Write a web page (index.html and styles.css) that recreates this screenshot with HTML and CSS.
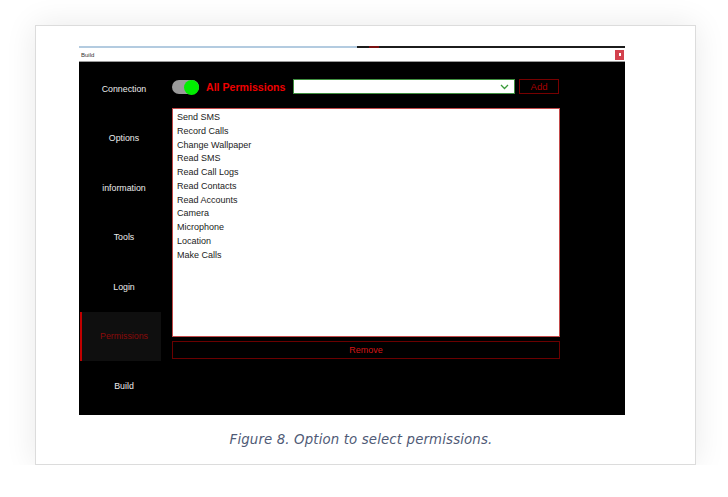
FILE: index.html
```html
<!DOCTYPE html>
<html lang="en">

<head>
    <meta charset="UTF-8">
    <meta name="viewport" content="width=device-width, initial-scale=1.0">
    <title>Figure 8</title>
    <link rel="stylesheet" href="styles.css">
</head>

<body>
    <div class="card">
        <div class="window">
            <div class="window-strip"></div>
            <div class="title-bar">
                <span class="title">Build</span>
                <span class="close"><i></i></span>
            </div>
            <div class="window-body">
                <nav class="sidebar">
                    <a class="side-item">Connection</a>
                    <a class="side-item">Options</a>
                    <a class="side-item">information</a>
                    <a class="side-item">Tools</a>
                    <a class="side-item">Login</a>
                    <a class="side-item active">Permissions</a>
                    <a class="side-item">Build</a>
                </nav>
                <div class="main">
                    <div class="top-row">
                        <span class="toggle"><span class="knob"></span></span>
                        <span class="all-label">All Permissions</span>
                        <div class="select">
                            <svg width="9" height="6" viewBox="0 0 9 6">
                                <path d="M1 1 L4.5 4.5 L8 1" fill="none" stroke="#3a9a3a" stroke-width="1.3" />
                            </svg>
                        </div>
                        <button class="btn-add">Add</button>
                    </div>
                    <ul class="perm-list">
                        <li>Send SMS</li>
                        <li>Record Calls</li>
                        <li>Change Wallpaper</li>
                        <li>Read SMS</li>
                        <li>Read Call Logs</li>
                        <li>Read Contacts</li>
                        <li>Read Accounts</li>
                        <li>Camera</li>
                        <li>Microphone</li>
                        <li>Location</li>
                        <li>Make Calls</li>
                    </ul>
                    <button class="btn-remove">Remove</button>
                </div>
            </div>
        </div>
        <p class="caption">Figure 8. Option to select permissions.</p>
    </div>
</body>

</html>
```

FILE: styles.css
```css
body {
    margin: 0;
    padding: 25px 0 0 35px;
    background: #fff;
    font-family: 'Liberation Sans', Arial, sans-serif;
}

/* Tarjeta de la figura */
.card {
    width: 661px;
    height: 440px;
    border: 1px solid #dcdcdc;
    background: #fff;
    box-shadow: 0 0 30px rgba(0, 0, 0, 0.09);
    box-sizing: border-box;
    padding: 20px 0 0 43px;
}

.window {
    width: 546px;
    height: 369px;
    background: #000;
    display: flex;
    flex-direction: column;
}

.window-strip {
    height: 2px;
    background: linear-gradient(to right, #b3cbe0 0, #b3cbe0 278px, #1c1c1c 278px, #1c1c1c 290px, #7a1010 290px, #7a1010 300px, #1c1c1c 300px);
}

.title-bar {
    height: 13px;
    background: #fff;
    border-bottom: 1px solid #9a9a9a;
    display: flex;
    justify-content: space-between;
    align-items: center;
    padding-left: 2px;
}

.title {
    font-size: 6px;
    color: #333;
}

.close {
    width: 9px;
    height: 10px;
    background: #d3414d;
    margin-right: 1px;
    display: flex;
    align-items: center;
    justify-content: center;
}

.close i {
    width: 2px;
    height: 3px;
    background: #fff;
}

.window-body {
    flex: 1;
    display: flex;
}

/* Menú lateral */
.sidebar {
    width: 82px;
    padding-top: 2px;
    display: flex;
    flex-direction: column;
}

.side-item {
    height: 49.5px;
    display: flex;
    align-items: center;
    justify-content: center;
    padding-left: 8px;
    font-size: 8.8px;
    color: #ececec;
}

.side-item.active {
    background: #0f0f0f;
    color: #8c0a0a;
    border-left: 2px solid #c00000;
    margin-left: 1px;
    padding-left: 5px;
}

/* Contenido */
.main {
    flex: 1;
    padding: 17px 65px 0 11px;
    display: flex;
    flex-direction: column;
}

.top-row {
    height: 15px;
    display: flex;
    align-items: center;
}

.toggle {
    width: 27px;
    height: 14px;
    border-radius: 7px;
    background: #9a9a9a;
    position: relative;
    margin-top: 1px;
}

.knob {
    position: absolute;
    right: 0;
    top: -0.5px;
    width: 15px;
    height: 15px;
    border-radius: 50%;
    background: #00ee00;
}

.all-label {
    font-size: 10.6px;
    font-weight: bold;
    color: #ee0000;
    margin-left: 7px;
    width: 87px;
}

.select {
    width: 222px;
    height: 15px;
    background: #fff;
    border: 1px solid #3f8f3f;
    box-sizing: border-box;
    display: flex;
    align-items: center;
    justify-content: flex-end;
    padding-right: 5px;
}

.btn-add {
    width: 40px;
    height: 15px;
    margin-left: 4px;
    background: #000;
    border: 1px solid #760000;
    color: #a80000;
    font-family: inherit;
    font-size: 9.5px;
    padding: 0;
}

.perm-list {
    list-style: none;
    margin: 14px 0 0;
    padding: 2px 4px;
    height: 229px;
    box-sizing: border-box;
    background: #fff;
    border: 1px solid #c24a4a;
    font-size: 9px;
    color: #222;
}

.perm-list li {
    height: 13.75px;
    line-height: 13.75px;
}

.btn-remove {
    margin-top: 4px;
    height: 18px;
    background: #000;
    border: 1px solid #6a0000;
    color: #d41616;
    font-family: inherit;
    font-size: 9px;
    padding: 0;
}

/* Pie de figura */
.caption {
    margin: 17px 9px 0 -43px;
    text-align: center;
    font-family: 'DejaVu Sans', sans-serif;
    font-style: italic;
    font-size: 13.3px;
    letter-spacing: 0.15px;
    color: #4f5a76;
}
```
